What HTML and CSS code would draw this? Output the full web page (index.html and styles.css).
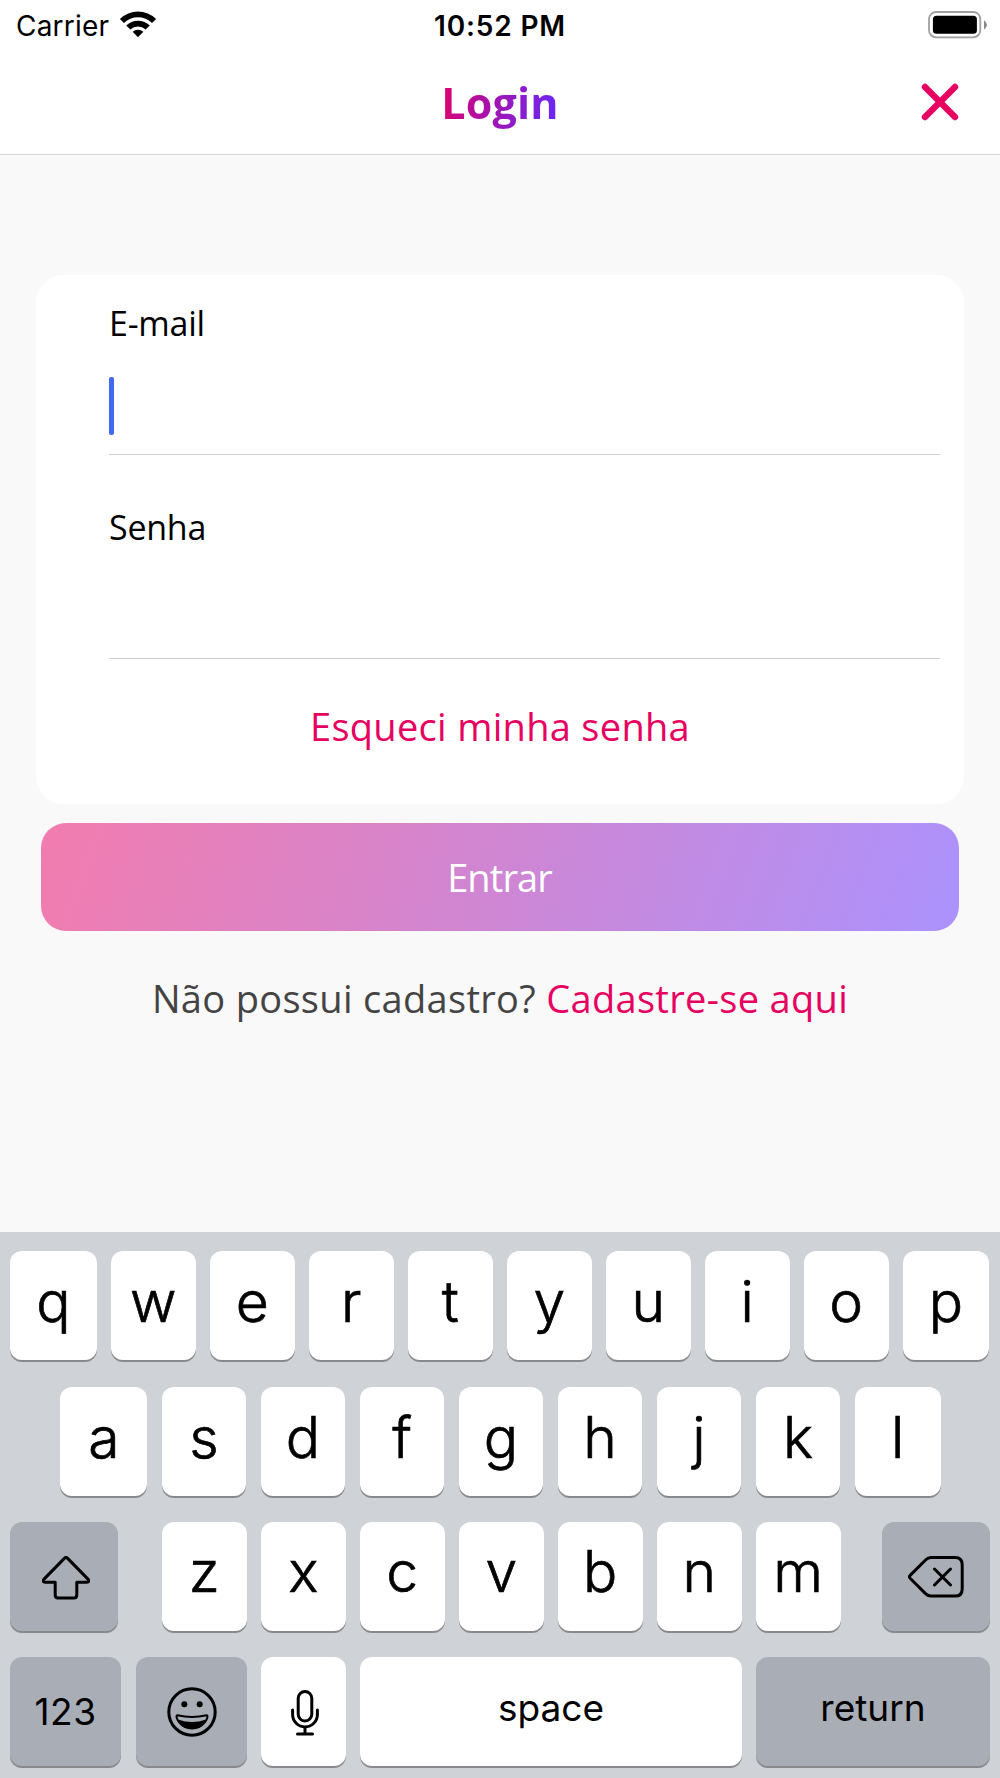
FILE: index.html
```html
<!DOCTYPE html>
<html lang="pt-BR">
<head>
<meta charset="utf-8">
<title>Login</title>
<link rel="stylesheet" href="styles.css">
</head>
<body>
<div class="screen">
  <div class="status">
    <div class="status-left">
      <span class="carrier">Carrier</span>
      <svg class="wifi" width="38" height="28" viewBox="0 0 38 28">
        <path d="M19 27.2l-5.4-5.4a8 8 0 0 1 10.8 0z"/>
        <path d="M7.2 15.4a17 17 0 0 1 23.6 0l-4.2 4.2a11 11 0 0 0-15.2 0z"/>
        <path d="M.9 8.9a26 26 0 0 1 36.2 0l-4.1 4.1a20 20 0 0 0-28 0z"/>
      </svg>
    </div>
    <span class="time">10:52 PM</span>
    <svg class="battery" width="60" height="28" viewBox="0 0 60 28">
      <rect x="1" y="1" width="51.3" height="25.3" rx="7" fill="none" stroke="#a0a0a0" stroke-width="1.8"/>
      <rect x="4.9" y="4.8" width="44" height="18" rx="3.6"/>
      <path d="M56 9.2q3 2 3 4.6t-3 5z" fill="#8a8a8a"/>
    </svg>
  </div>
  <header class="header">
    <h1 class="title">Login</h1>
    <svg class="close" width="38" height="38" viewBox="0 0 38 38"><path d="M4 4l30 30M34 4L4 34"/></svg>
  </header>
  <main class="main">
    <form class="card">
      <label class="label">E-mail</label>
      <div class="input"><span class="caret"></span></div>
      <label class="label second">Senha</label>
      <div class="input"></div>
      <a class="forgot">Esqueci minha senha</a>
    </form>
    <div class="submit"><span>Entrar</span></div>
    <p class="signup">Não possui cadastro? <a>Cadastre-se aqui</a></p>
  </main>
  <div class="keyboard">
    <div class="row row1">
      <div class="key">q</div><div class="key">w</div><div class="key">e</div><div class="key">r</div><div class="key">t</div><div class="key">y</div><div class="key">u</div><div class="key">i</div><div class="key">o</div><div class="key">p</div>
    </div>
    <div class="row row2">
      <div class="key">a</div><div class="key">s</div><div class="key">d</div><div class="key">f</div><div class="key">g</div><div class="key">h</div><div class="key">j</div><div class="key">k</div><div class="key">l</div>
    </div>
    <div class="row row3">
      <div class="key dark shift">
        <svg width="48" height="44" viewBox="0 0 48 44"><path d="M22.6 2.1L1.8 23.4c-1.3 1.4-.8 2.8 1.2 2.8h10.200v12.800q0 3 3 3h15.600q3 0 3-3V26.200H45c2 0 2.500-1.400 1.200-2.800L25.400 2.100q-1.400-1.200-2.800 0z"/></svg>
      </div>
      <div class="key">z</div><div class="key">x</div><div class="key">c</div><div class="key">v</div><div class="key">b</div><div class="key">n</div><div class="key">m</div>
      <div class="key dark delete">
        <svg width="56" height="42" viewBox="0 0 56 42"><path d="M2.100 19.400L17.800 3.700Q20 1.500 23 1.500h24q7.200 0 7.200 7.200v24.200q0 7.200-7.200 7.200H23q-3 0-5.200-2.200L2.100 22.200q-1.300-1.400 0-2.800zM26.500 13l16 16M42.500 13l-16 16"/></svg>
      </div>
    </div>
    <div class="row row4">
      <div class="key dark word num">123</div>
      <div class="key dark emoji">
        <svg width="50" height="50" viewBox="0 0 50 50"><circle cx="25" cy="25" r="23.200"/><circle class="fill" cx="17.300" cy="17.300" r="3"/><circle class="fill" cx="32.700" cy="17.300" r="3"/><path class="thin" d="M10.500 28.200q14.500 3.600 29 0c1.800 0 1 4-1.500 7a16.500 16.500 0 0 1-26 0c-2.500-3-3.300-7-1.500-7z"/><path class="fill" d="M11 32.500q14 5 28 0a15.500 15.500 0 0 1-28 0z"/></svg>
      </div>
      <div class="key mic">
        <svg width="28" height="46" viewBox="0 0 28 46"><rect x="7.200" y="1.500" width="13.600" height="29.500" rx="6.800"/><path d="M1.600 20v4.500a12.400 12.400 0 0 0 24.800 0V20M14 37v6M6.500 44h15"/></svg>
      </div>
      <div class="key word">space</div>
      <div class="key dark word">return</div>
    </div>
  </div>
</div>
</body>
</html>
```
FILE: styles.css
```css
* { box-sizing: border-box; }
body { margin: 0; background: #fff; }
.screen {
  width: 1000px;
  height: 1778px;
  display: flex;
  flex-direction: column;
  overflow: hidden;
  font-family: "Open Sans", sans-serif;
}
.status {
  height: 51px;
  display: grid;
  grid-template-columns: 1fr auto 1fr;
  align-items: center;
  padding: 0 12px 0 16px;
  font: 400 28px/51px Inter, sans-serif;
}
.status-left { display: flex; align-items: center; gap: 10px; }
.carrier { padding-top: 1px; letter-spacing: 0.2px; }
.wifi { margin-bottom: 5px; }
.time {
  padding: 1px 4px 0 0;
  font-weight: 600;
  letter-spacing: 0.85px;
}
.battery { justify-self: end; margin-bottom: 2px; }
.header {
  height: 104px;
  display: grid;
  grid-template-columns: 1fr auto 1fr;
  align-items: start;
  padding: 0 41px;
  border-bottom: 1px solid #d5d5d5;
}
.title {
  grid-column: 2;
  margin: 22px 0 0;
  font-size: 43px;
  line-height: 60px;
  font-weight: 700;
  letter-spacing: 0.2px;
  color: transparent;
  background: linear-gradient(100deg, #e0006a, #9d16b8 50%, #6528fa);
  -webkit-background-clip: text;
  background-clip: text;
}
.close {
  justify-self: end;
  margin-top: 32px;
  fill: none;
  stroke: #e60060;
  stroke-width: 6.4;
  stroke-linecap: round;
}
.main {
  height: 1077px;
  padding: 120px 36px 0;
  background: #f9f9f9;
}
.card {
  height: 529px;
  padding: 24px 24px 0 73px;
  border-radius: 27px;
  background: #fff;
}
.label {
  display: block;
  font-size: 34px;
  line-height: 48px;
  letter-spacing: -0.25px;
}
.second { margin-top: 48px; }
.input {
  height: 108px;
  padding-top: 30px;
  border-bottom: 1px solid #cfcfcf;
}
.caret {
  display: block;
  width: 5px;
  height: 58px;
  border-radius: 2px;
  background: #4169f0;
}
.forgot {
  display: block;
  margin: 40px 49px 0 0;
  font-size: 38px;
  line-height: 54px;
  letter-spacing: 0.3px;
  text-align: center;
  color: #e60060;
}
.submit {
  height: 108px;
  margin: 19px 5px 0;
  padding-right: 1px;
  display: flex;
  justify-content: center;
  border-radius: 25px;
  background: linear-gradient(110deg, #f27cae, #cf86d3 50%, #ab92fd);
  color: #fff;
  font-size: 38px;
  line-height: 108px;
  letter-spacing: -0.9px;
}
.signup {
  margin: 40px 0 0;
  font-size: 38px;
  line-height: 54px;
  letter-spacing: 0.32px;
  text-align: center;
  color: #444;
  white-space: nowrap;
}
.signup a { color: #e60060; }
.keyboard {
  height: 546px;
  padding: 19px 10px 0;
  display: flex;
  flex-direction: column;
  gap: 26.4px;
  background: #cfd2d7;
  font-family: Inter, sans-serif;
  color: #000;
}
.row { height: 109px; display: grid; column-gap: 14.3px; }
.row1 { grid-template-columns: 86.7px repeat(8, 84.7px) 86.3px; }
.row2 {
  grid-template-columns: 87px repeat(7, 84.7px) 86.3px;
  margin: 0.4px 0 -0.4px;
  padding-left: 50.4px;
}
.row3 { display: flex; }
.row4 { grid-template-columns: 111px 112px 84.7px 381.5px 234px; column-gap: 14.2px; }
.key {
  display: flex;
  justify-content: center;
  border-radius: 12px;
  background: #fff;
  box-shadow: 0 2px 0 #88898d;
  font-size: 57px;
  font-weight: 300;
  line-height: 101px;
  -webkit-text-stroke: 0.7px #000;
}
.row3 .key { width: 84.7px; line-height: 100px; }
.row3 .shift { width: 108px; margin-right: 29.7px; }
.row3 .delete { width: 108px; margin-left: 27px; }
.row4 .emoji { margin-left: 1px; }
.dark { background: #a9adb6; }
.row .word {
  font-size: 37px;
  font-weight: 400;
  line-height: 102px;
  -webkit-text-stroke: 0;
}
.row .num { line-height: 109px; letter-spacing: 0.5px; }
.key svg {
  align-self: center;
  margin-top: 1px;
  fill: none;
  stroke: #000;
  stroke-width: 3;
  stroke-linecap: round;
  stroke-linejoin: round;
}
.key.shift svg { margin: 3px 0 0 3px; }
.key.delete svg { margin: 2px 0 0 1px; }
.key.mic svg { margin: 3px 0 0 2px; }
.key .fill { fill: #000; stroke: none; }
.key .thin { stroke-width: 2; }
```
